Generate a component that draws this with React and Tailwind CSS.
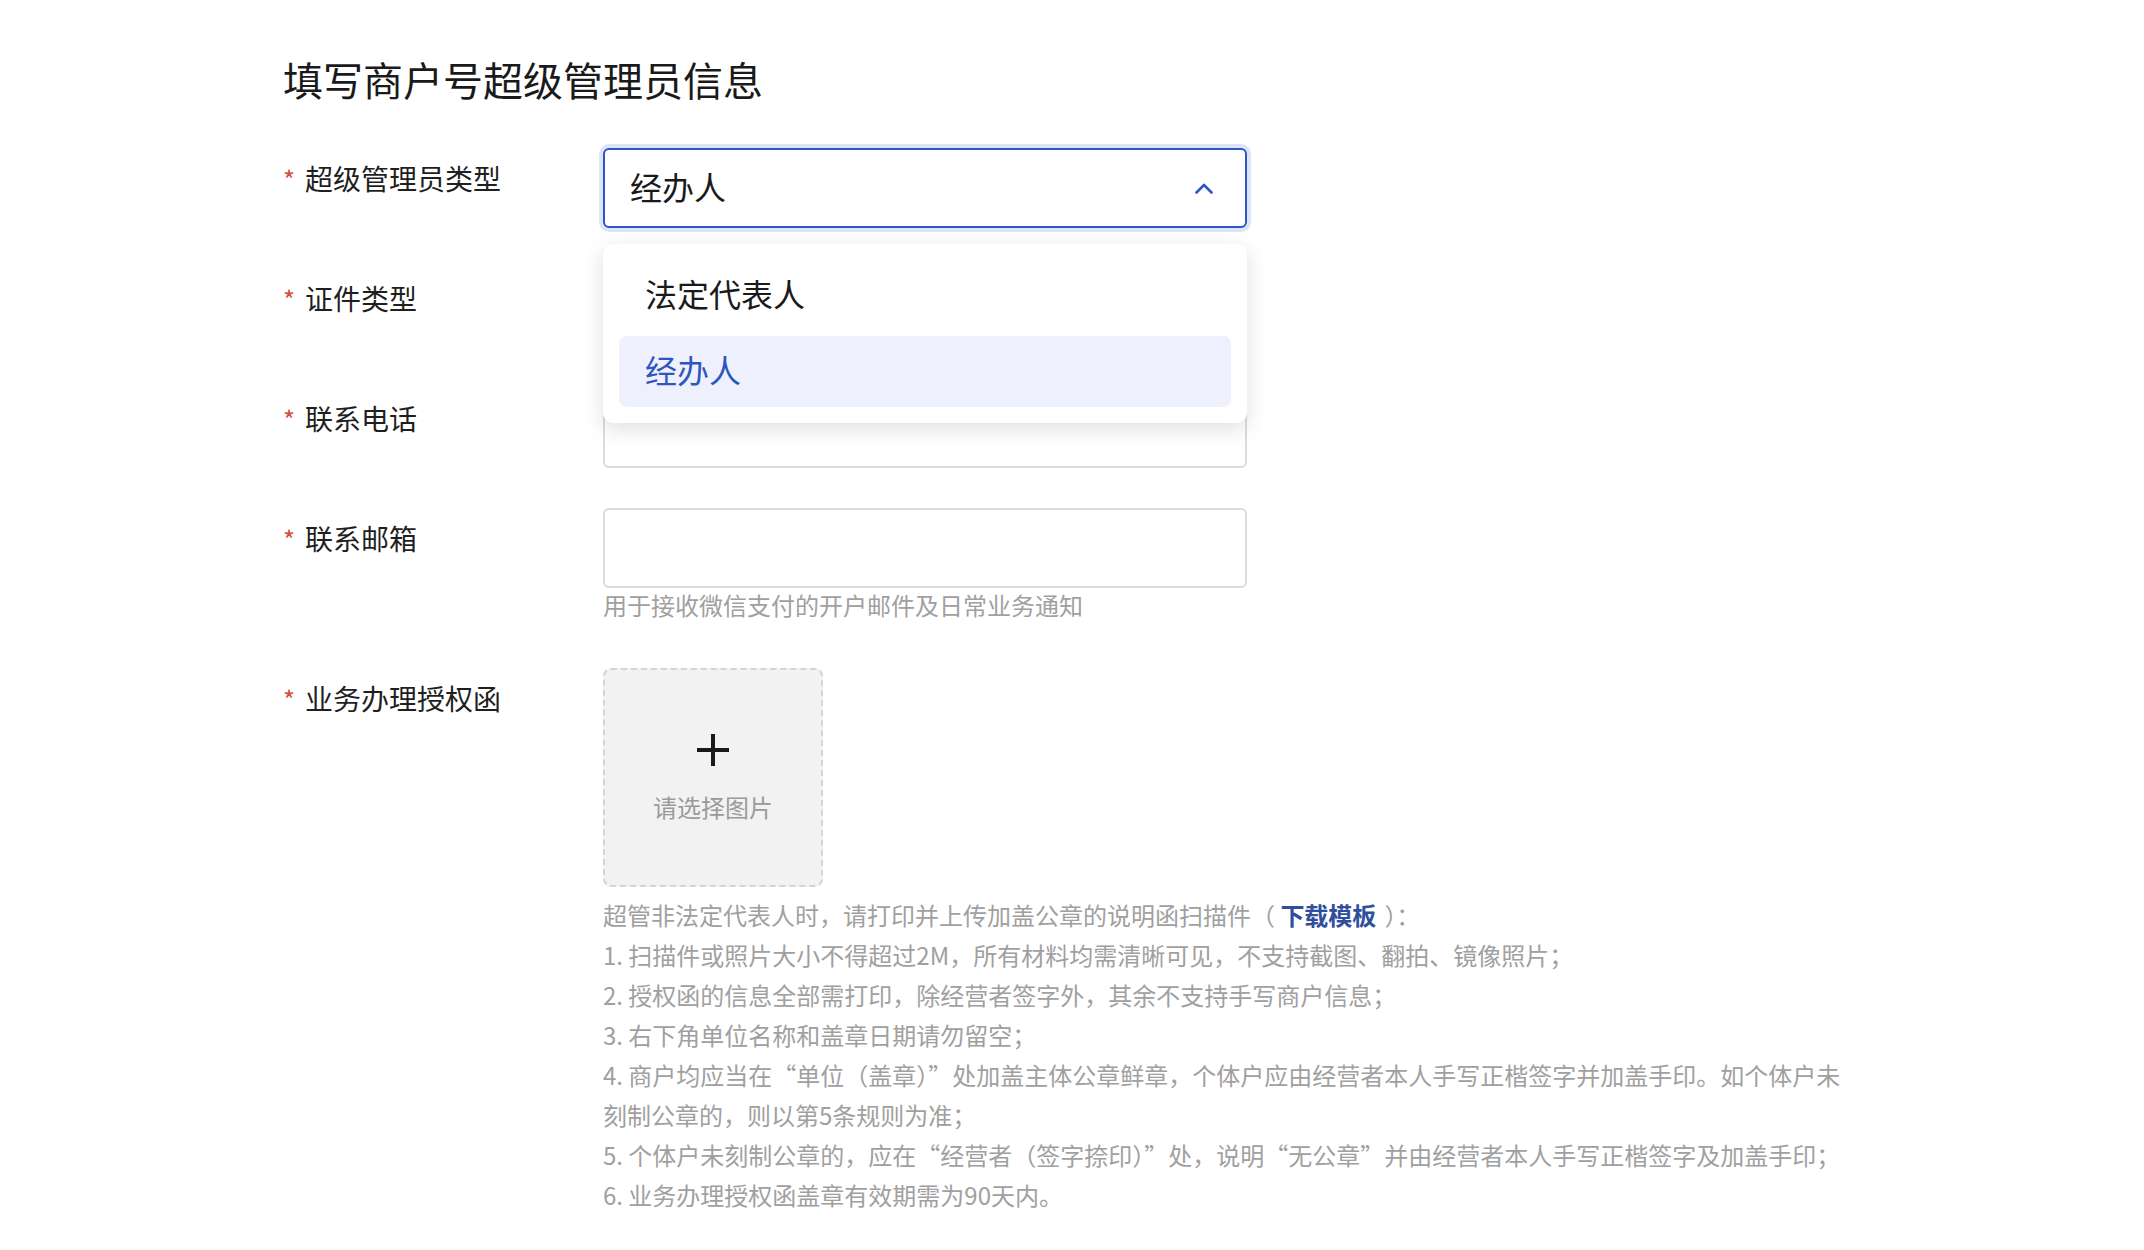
import React from 'react';

const FONT = { fontFamily: '"Noto Sans CJK SC", "Noto Sans", sans-serif' };

function Label({ children }) {
  return (
    <div className="w-[320px] shrink-0 pt-[10px] text-[28px] leading-[40px] text-[#1f1f1f]">
      <span className="inline-block w-[22px] text-[26px] text-[#d0503c]">*</span>
      {children}
    </div>
  );
}

function TextBox() {
  return <div className="h-[80px] w-[644px] rounded-[6px] border-2 border-[#dcdcdc] bg-white" />;
}

function ChevronUp() {
  return (
    <svg width="18" height="11" viewBox="0 0 18 11" fill="none">
      <polyline points="1.5,9.5 9,2 16.5,9.5" stroke="#2e56c0" strokeWidth="2.6" strokeLinecap="round" strokeLinejoin="round" />
    </svg>
  );
}

function AdminTypeSelect() {
  return (
    <div className="relative w-[644px]">
      <div className="flex h-[80px] items-center justify-between rounded-[6px] border-2 border-[#2e56c0] bg-white pl-[25px] pr-[32px] shadow-[0_0_0_4px_#dce4f8]">
        <span className="pb-[5px] text-[32px] text-[#1a1a1a]">经办人</span>
        <ChevronUp />
      </div>
      {/* open menu */}
      <div className="absolute left-0 top-[96px] z-10 flex w-full flex-col gap-[5px] rounded-[10px] bg-white p-[16px] shadow-[0_6px_22px_rgba(0,0,0,0.13)]">
        <div className="flex h-[71px] items-center rounded-[8px] px-[26px] pb-[5px] text-[32px] text-[#1a1a1a]">法定代表人</div>
        <div className="flex h-[71px] items-center rounded-[8px] bg-[#eef1fd] px-[26px] pb-[5px] text-[32px] text-[#2e56c0]">经办人</div>
      </div>
    </div>
  );
}

function Upload() {
  return (
    <div className="flex h-[219px] w-[220px] flex-col items-center rounded-[8px] border-2 border-dashed border-[#d4d4d4] bg-[#f2f2f2]">
      <svg className="mt-[63px]" width="34" height="34" viewBox="0 0 34 34">
        <path d="M17 1v32M1 17h32" stroke="#1a1a1a" strokeWidth="4" />
      </svg>
      <span className="mt-[24px] text-[24px] leading-[32px] text-[#9a9a9a]">请选择图片</span>
    </div>
  );
}

const notes = [
  '1. 扫描件或照片大小不得超过2M，所有材料均需清晰可见，不支持截图、翻拍、镜像照片；',
  '2. 授权函的信息全部需打印，除经营者签字外，其余不支持手写商户信息；',
  '3. 右下角单位名称和盖章日期请勿留空；',
  '4. 商户均应当在“单位（盖章）”处加盖主体公章鲜章，个体户应由经营者本人手写正楷签字并加盖手印。如个体户未刻制公章的，则以第5条规则为准；',
  '5. 个体户未刻制公章的，应在“经营者（签字捺印）”处，说明“无公章”并由经营者本人手写正楷签字及加盖手印；',
  '6. 业务办理授权函盖章有效期需为90天内。',
];

export default function App() {
  return (
    <div className="min-h-screen bg-white pl-[283px] pt-[54px]" style={FONT}>
      <h1 className="text-[40px] leading-[50px] text-[#1a1a1a]">填写商户号超级管理员信息</h1>

      <div className="mt-[44px] flex flex-col gap-[40px]">
        <div className="flex">
          <Label>超级管理员类型</Label>
          <AdminTypeSelect />
        </div>

        <div className="flex">
          <Label>证件类型</Label>
          <TextBox />
        </div>

        <div className="flex">
          <Label>联系电话</Label>
          <TextBox />
        </div>

        <div className="flex">
          <Label>联系邮箱</Label>
          <div className="flex flex-col">
            <TextBox />
            <p className="pb-[11px] pt-[5px] text-[24px] leading-[24px] text-[#a0a0a0]">用于接收微信支付的开户邮件及日常业务通知</p>
          </div>
        </div>

        <div className="flex">
          <Label>业务办理授权函</Label>
          <div className="flex flex-col">
            <Upload />
            <div className="mt-[8px] w-[1240px] text-[24px] leading-[40px] text-[#a0a0a0]">
              <p>
                超管非法定代表人时，请打印并上传加盖公章的说明函扫描件（ <a className="font-bold text-[#2f4f9e]">下载模板</a>
                <span className="ml-[8px]">）：</span>
              </p>
              {notes.map((n) => (
                <p key={n}>{n}</p>
              ))}
            </div>
          </div>
        </div>
      </div>
    </div>
  );
}
